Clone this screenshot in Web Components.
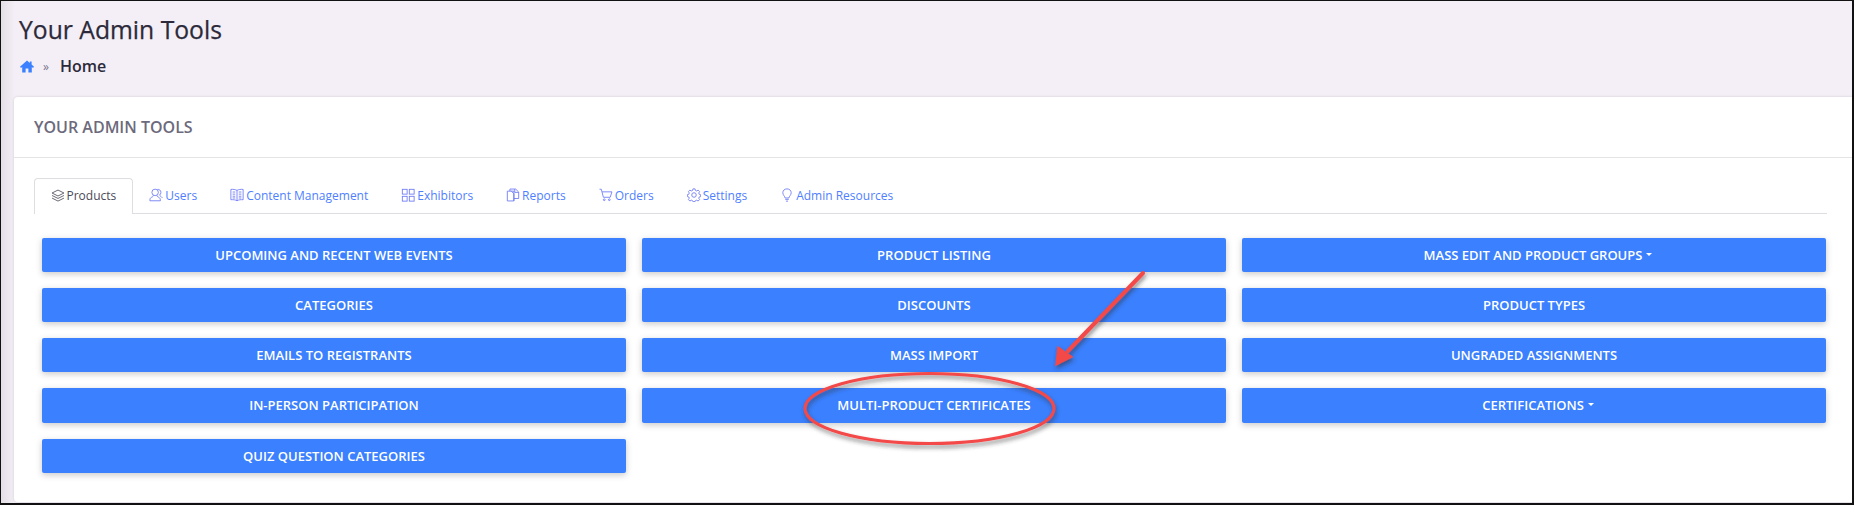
<!DOCTYPE html>
<html>
<head>
<meta charset="utf-8">
<title>Your Admin Tools</title>
<style>
  html, body { margin: 0; height: 100%; }
  body { font-family: "Open Sans", "Noto Sans", sans-serif; background: #f4eff6; }
</style>
</head>
<body>
<admin-page>
  <page-title slot="title" heading="Your Admin Tools" crumb="Home"></page-title>
  <admin-card heading="YOUR ADMIN TOOLS">
    <tab-bar>
      <tab-item icon="layers" active>Products</tab-item>
      <tab-item icon="users">Users</tab-item>
      <tab-item icon="book">Content Management</tab-item>
      <tab-item icon="grid">Exhibitors</tab-item>
      <tab-item icon="file">Reports</tab-item>
      <tab-item icon="cart">Orders</tab-item>
      <tab-item icon="gear">Settings</tab-item>
      <tab-item icon="bulb">Admin Resources</tab-item>
    </tab-bar>
    <tool-grid>
      <tool-button>UPCOMING AND RECENT WEB EVENTS</tool-button>
      <tool-button>PRODUCT LISTING</tool-button>
      <tool-button caret>MASS EDIT AND PRODUCT GROUPS</tool-button>
      <tool-button>CATEGORIES</tool-button>
      <tool-button>DISCOUNTS</tool-button>
      <tool-button>PRODUCT TYPES</tool-button>
      <tool-button>EMAILS TO REGISTRANTS</tool-button>
      <tool-button>MASS IMPORT</tool-button>
      <tool-button>UNGRADED ASSIGNMENTS</tool-button>
      <tool-button tall>IN-PERSON PARTICIPATION</tool-button>
      <tool-button tall>MULTI-PRODUCT CERTIFICATES</tool-button>
      <tool-button tall caret>CERTIFICATIONS</tool-button>
      <tool-button>QUIZ QUESTION CATEGORIES</tool-button>
    </tool-grid>
  </admin-card>
  <call-out></call-out>
</admin-page>

<script>
const ICONS = {
  layers: '<path d="M8 1.2 14.8 4.6 8 8 1.2 4.6Z"/><path d="M1.2 7.4 8 10.8 14.8 7.4"/><path d="M1.2 10.4 8 13.8 14.8 10.4"/>',
  users: '<circle cx="7" cy="5" r="3.7"/><path d="M5 8.4C5 10 3 10.4 2 11.2 1.2 11.8 1 12.8 1 14.6H13C13 12.8 12.8 11.8 12 11.2 11 10.4 9 10 9 8.4"/><path d="M9.6 1.6C11.8 1.2 13.6 2.8 13.6 5 13.6 6.4 13 7.4 12 8.2 12.6 9.4 14.8 9.8 15.4 11.4"/>',
  book: '<path d="M1 1.6C3.5 1.4 6.2 1.6 8 2.8 9.8 1.6 12.5 1.4 15 1.6V13.4C12.5 13.2 9.8 13.4 8 14.6 6.2 13.4 3.5 13.2 1 13.4Z"/><path d="M8 2.8V14.6M3 4.6H6M3 7H6M3 9.4H6M3 11.4H6M10 4.6H13M10 7H13M10 9.4H13M10 11.4H13"/>',
  grid: '<rect x="1.5" y="1.5" width="5.5" height="5.5"/><rect x="9.5" y="1.5" width="5.5" height="5.5"/><rect x="1.5" y="9.5" width="5.5" height="5.5"/><rect x="9.5" y="9.5" width="5.5" height="5.5"/>',
  file: '<path d="M1.5 3.6H9V14.8H1.5Z"/><path d="M4.5 3.6V1.2H11L14.5 4.6V12H9"/><path d="M10 1.2V5H14.5M6 3.6 9 6.5V14.8"/>',
  cart: '<path d="M.6 1.4H2.6L5 10.6H12.8L14.8 4.4H3.5"/><circle cx="6" cy="13.4" r="1"/><circle cx="11.8" cy="13.4" r="1"/>',
  gear: '<circle cx="8" cy="8" r="2.6"/><path d="M6.8 1H9.2L9.6 2.8 11.1 3.4 12.7 2.4 14.4 4.1 13.4 5.7 14 7.2 15.6 7.6V9.8L14 10.2 13.4 11.6 14.4 13.2 12.7 14.9 11.1 13.9 9.6 14.5 9.2 15.6H6.8L6.4 14.5 4.9 13.9 3.3 14.9 1.6 13.2 2.6 11.6 2 10.2 .4 9.8V7.6L2 7.2 2.6 5.7 1.6 4.1 3.3 2.4 4.9 3.4 6.4 2.8Z"/>',
  bulb: '<path d="M5.8 11.4C5.6 9.4 3.2 8 3.2 5.4 3.2 2.8 5.3 1 8 1 10.7 1 12.8 2.8 12.8 5.4 12.8 8 10.4 9.4 10.2 11.4Z"/><path d="M6 13H10M6.8 15H9.2"/>'
};

class AdminPage extends HTMLElement {
  constructor() {
    super();
    this.attachShadow({ mode: "open" }).innerHTML = `
      <style>
        :host {
          display: block;
          position: relative;
          box-sizing: border-box;
          width: 1854px;
          height: 505px;
          overflow: hidden;
          background: linear-gradient(90deg, #e4dfe6 0, #f4eff6 14px);
          border: 1px solid #111;
          border-width: 1px 2px 2px 1px;
          padding: 0 0 1px 13px;
        }
        .wrap { display: flex; flex-direction: column; height: 100%; }
      </style>
      <div class="wrap"><slot name="title"></slot><slot></slot></div>`;
  }
}

class PageTitle extends HTMLElement {
  constructor() {
    super();
    const heading = this.getAttribute("heading");
    const crumb = this.getAttribute("crumb");
    this.attachShadow({ mode: "open" }).innerHTML = `
      <style>
        :host { display: block; height: 96px; box-sizing: border-box; padding: 13px 0 0 5px; color: #2c2a3a; }
        h1 { margin: 0; font-size: 24.7px; line-height: 32px; font-weight: 400; -webkit-text-stroke: .25px #2c2a3a; }
        .crumb { display: flex; align-items: center; height: 24px; margin-top: 8px; font-size: 16px; font-weight: 600; }
        svg { width: 14px; height: 13px; fill: #3a80ff; margin-left: 1px; }
        .sep { color: #77748a; font-size: 12px; font-weight: 400; margin: 0 11px 0 9px; }
      </style>
      <h1>${heading}</h1>
      <div class="crumb">
        <svg viewBox="0 0 14 13"><path d="M7 .5 0 6.8 1 8 2.2 7V12.6H5.6V8.6H8.4V12.6H11.8V7L13 8 14 6.8 11.6 4.6V1.4H9.8V3Z"/></svg>
        <span class="sep">»</span><span>${crumb}</span>
      </div>`;
  }
}

class AdminCard extends HTMLElement {
  constructor() {
    super();
    const heading = this.getAttribute("heading");
    this.attachShadow({ mode: "open" }).innerHTML = `
      <style>
        :host {
          display: block;
          flex: 1;
          box-sizing: border-box;
          height: 404px;
          background: #fff;
          border-radius: 4px 0 0 4px;
          box-shadow: 0 0 2px 1px #e3dee5;
        }
        header {
          box-sizing: border-box;
          height: 61px;
          padding: 0 20px;
          display: flex;
          align-items: center;
          border-bottom: 1px solid #e4e4e6;
          font-size: 16px;
          font-weight: 600;
          color: #6c6a7c;
        }
        .body { padding: 20px 25px 0 20px; }
      </style>
      <header>${heading}</header>
      <div class="body"><slot></slot></div>`;
  }
}

class TabBar extends HTMLElement {
  constructor() {
    super();
    this.attachShadow({ mode: "open" }).innerHTML = `
      <style>
        :host { display: flex; height: 36px; box-sizing: border-box; border-bottom: 1px solid #dedee2; }
      </style>
      <slot></slot>`;
  }
}

class TabItem extends HTMLElement {
  constructor() {
    super();
    const icon = ICONS[this.getAttribute("icon")];
    this.attachShadow({ mode: "open" }).innerHTML = `
      <style>
        :host {
          display: flex;
          align-items: center;
          gap: 2px;
          box-sizing: border-box;
          height: 35px;
          padding: 0 15.5px 2px;
          font-size: 12px;
          color: #4f7fff;
          border: 1px solid transparent;
          border-bottom: 0;
        }
        :host([active]) {
          height: 36px;
          color: #4c4a58;
          background: #fff;
          border-color: #dedee2;
          border-radius: 4px 4px 0 0;
        }
        svg { width: 14px; height: 14px; fill: none; stroke: #6f7cf6; stroke-width: 1; }
        :host([active]) svg { stroke: #55535f; }
      </style>
      <svg viewBox="0 0 16 16">${icon}</svg><slot></slot>`;
  }
}

class ToolGrid extends HTMLElement {
  constructor() {
    super();
    this.attachShadow({ mode: "open" }).innerHTML = `
      <style>
        :host {
          display: grid;
          grid-template-columns: repeat(3, 584px);
          column-gap: 16px;
          row-gap: 16px;
          padding: 24px 0 0 8px;
        }
      </style>
      <slot></slot>`;
  }
}

class ToolButton extends HTMLElement {
  constructor() {
    super();
    this.attachShadow({ mode: "open" }).innerHTML = `
      <style>
        :host {
          display: flex;
          align-items: center;
          justify-content: center;
          box-sizing: border-box;
          height: 34px;
          background: #3a80ff;
          color: #fff;
          font-size: 13px;
          font-weight: 600;
          border-radius: 2px;
          box-shadow: 0 2px 6px rgba(60, 60, 70, .28);
        }
        :host([tall]) { height: 35px; padding-bottom: 1px; }
        :host([caret]) { padding-left: 8px; }
        .caret { display: none; width: 0; height: 0; margin-left: 4px; margin-top: -2px; border: 3px solid transparent; border-top-color: #fff; border-bottom: 0; }
        :host([caret]) .caret { display: block; }
      </style>
      <slot></slot><span class="caret"></span>`;
  }
}

class CallOut extends HTMLElement {
  constructor() {
    super();
    this.attachShadow({ mode: "open" }).innerHTML = `
      <style>
        :host { position: absolute; left: 0; top: 0; width: 1854px; height: 505px; pointer-events: none; }
        svg { position: absolute; left: -1px; top: -1px; overflow: visible; }
      </style>
      <svg width="1854" height="505" viewBox="0 0 1854 505">
        <defs>
          <filter id="sh" x="-10%" y="-10%" width="120%" height="130%">
            <feDropShadow dx="1" dy="3" stdDeviation="2" flood-color="#333" flood-opacity=".55"/>
          </filter>
        </defs>
        <g filter="url(#sh)" fill="none" stroke="#f44848">
          <path d="M1143 273 1068 351" stroke-width="4" stroke-linecap="round"/>
          <path d="M1056 365 1058 347 1072 357Z" fill="#f44848" stroke-width="1.5"/>
          <ellipse cx="929.5" cy="408.5" rx="124.5" ry="35" stroke-width="3"/>
        </g>
      </svg>`;
  }
}

customElements.define("admin-page", AdminPage);
customElements.define("page-title", PageTitle);
customElements.define("admin-card", AdminCard);
customElements.define("tab-bar", TabBar);
customElements.define("tab-item", TabItem);
customElements.define("tool-grid", ToolGrid);
customElements.define("tool-button", ToolButton);
customElements.define("call-out", CallOut);
</script>
</body>
</html>
